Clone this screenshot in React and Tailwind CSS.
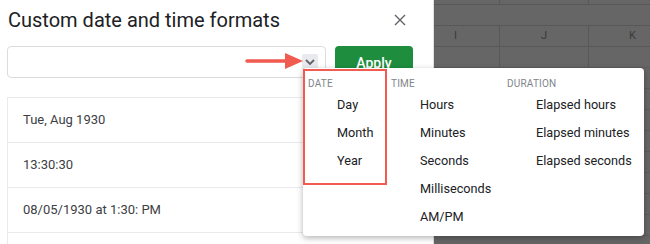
import React from "react";

const date = ["Day", "Month", "Year"];
const time = ["Hours", "Minutes", "Seconds", "Milliseconds", "AM/PM"];
const duration = ["Elapsed hours", "Elapsed minutes", "Elapsed seconds"];
const samples = ["Tue, Aug 1930", "13:30:30", "08/05/1930 at 1:30: PM", ""];

function MenuColumn({ title, items, width }) {
    return (
        <div className={width}>
            <div className="h-[14px] text-[10px] leading-[14px] tracking-[0.2px] text-[#80868b]">
                {title}
            </div>
            <div>
                {items.map((item) => (
                    <div
                        key={item}
                        className="h-[28px] pl-[29px] text-[12.7px] leading-[28px] text-[#202124]"
                    >
                        {item}
                    </div>
                ))}
            </div>
        </div>
    );
}

function SheetCols() {
    return (
        <div className="flex h-full">
            <div className="w-[66px] border-r border-[#585858]" />
            <div className="w-[89px] border-r border-[#585858]" />
            <div className="flex-1" />
        </div>
    );
}

export default function App() {
    return (
        <div
            className="relative flex h-[244px] w-[650px] overflow-hidden bg-white"
            style={{ fontFamily: "Roboto, 'Liberation Sans', sans-serif" }}
        >
            {/* dialog */}
            <div className="w-[434px] shrink-0 border-r border-[#e0e0e0] bg-white">
                <div className="flex h-[46px] items-start justify-between pl-[8px] pr-[27px] pt-[7px]">
                    <h1 className="text-[20px] leading-[26px] text-[#202124]">
                        Custom date and time formats
                    </h1>
                    <svg width="12" height="12" viewBox="0 0 12 12" className="mt-[7px]">
                        <path d="M1 1 L11 11 M11 1 L1 11" stroke="#5f6368" strokeWidth="1.4" />
                    </svg>
                </div>

                <div className="flex items-start gap-[9px] pl-[7px]">
                    <div className="flex h-[32px] w-[319px] items-center justify-end rounded-[4px] border border-[#dadce0] pr-[7px]">
                        <div className="flex h-[16px] w-[16px] items-center justify-center rounded-[2px] bg-[#e8eaed]">
                            <svg width="10" height="6" viewBox="0 0 10 6">
                                <path d="M1 1 L5 5 L9 1" fill="none" stroke="#5f6368" strokeWidth="1.8" />
                            </svg>
                        </div>
                    </div>
                    <button className="h-[32px] w-[78px] rounded-[4px] bg-[#1e8e3e] pt-[2px] text-[14px] font-medium text-white">
                        Apply
                    </button>
                </div>

                <div className="ml-[7px] mt-[19px] w-[420px] border-l border-[#e8eaed]">
                    {samples.map((s, i) => (
                        <div
                            key={i}
                            className="flex h-[45px] items-center border-t border-[#e8eaed] pl-[15px] text-[13px] text-[#3c4043]"
                        >
                            {s}
                        </div>
                    ))}
                </div>
            </div>

            {/* sheet behind */}
            <div className="flex flex-1 flex-col bg-[#666666]">
                <div className="h-[5px] border-b border-[#585858]">
                    <SheetCols />
                </div>
                <div className="h-[21px] border-b border-[#585858]" />
                <div className="flex h-[21px] border-b border-[#585858] text-[11px] leading-[20px] text-[#3a3a3a]">
                    <div className="w-[66px] border-r border-[#585858] pr-[42px] text-right">I</div>
                    <div className="w-[89px] border-r border-[#585858] text-center">J</div>
                    <div className="flex-1 pl-[40px]">K</div>
                </div>
                {[0, 1, 2, 3, 4, 5, 6, 7, 8].map((r) => (
                    <div key={r} className="h-[21px] border-b border-[#5c5c5c]">
                        <SheetCols />
                    </div>
                ))}
            </div>

            {/* red arrow */}
            <svg
                className="absolute left-[245px] top-[52px]"
                width="60"
                height="18"
                viewBox="0 0 60 18"
            >
                <path d="M2 9 H44" stroke="#f05a4f" strokeWidth="3.5" strokeLinecap="round" />
                <path d="M40 1 L58 9 L40 17 Z" fill="#f05a4f" />
            </svg>

            {/* dropdown menu */}
            <div className="absolute left-[303px] top-[68px] flex h-[168px] w-[341px] rounded-[4px] bg-white pl-[5px] pt-[9px] shadow-[0_2px_6px_rgba(0,0,0,0.3)]">
                <MenuColumn title="DATE" items={date} width="w-[83px]" />
                <MenuColumn title="TIME" items={time} width="w-[116px]" />
                <MenuColumn title="DURATION" items={duration} width="flex-1" />
            </div>

            {/* highlight box */}
            <div className="absolute left-[303px] top-[69px] h-[116px] w-[84px] border-[2.5px] border-[#f25b50]" />
        </div>
    );
}
